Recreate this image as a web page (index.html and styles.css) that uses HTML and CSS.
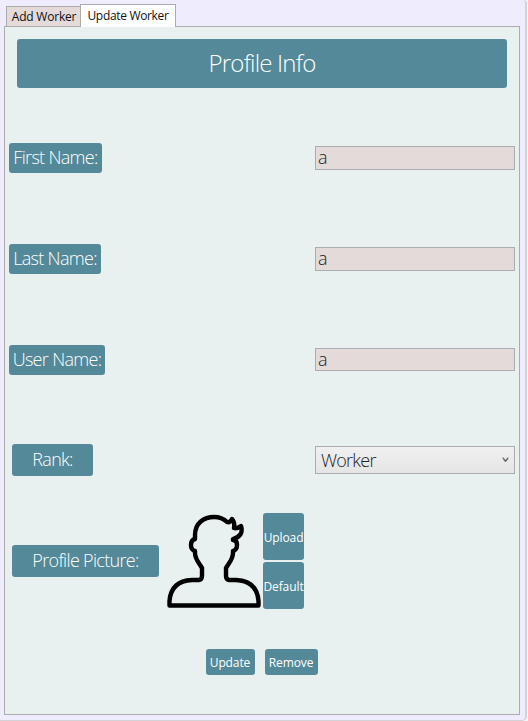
FILE: index.html
```html
<!DOCTYPE html>
<html lang="en">
<head>
<meta charset="utf-8">
<title>Update Worker</title>
<link rel="stylesheet" href="styles.css">
</head>
<body>
<div class="window">
  <div class="tabs">
    <div class="tab tab-add"><span>Add Worker</span></div>
    <div class="tab tab-update"><span>Update Worker</span></div>
  </div>
  <main class="panel">
    <h1 class="title"><span>Profile Info</span></h1>
    <div class="row short"><div class="label first"><span>First Name:</span></div><div class="field">a</div></div>
    <div class="row tall"><div class="label last"><span>Last Name:</span></div><div class="field">a</div></div>
    <div class="row compact"><div class="label user"><span>User Name:</span></div><div class="field small">a</div></div>
    <div class="row tall"><div class="label wide rank"><span>Rank:</span></div>
      <div class="select"><span>Worker</span>
        <svg class="chevron" width="7" height="6" viewBox="0 0 7 6"><path d="M1 .5v1.500L3.500 5 6 2V.5L3.500 3.200z" fill="#606060" stroke="#606060" stroke-width=".5"/></svg>
      </div>
    </div>
    <div class="row short picture-row">
      <div class="label wide picture"><span>Profile Picture:</span></div>
      <svg class="avatar" width="94" height="94" viewBox="0 0 94 94"><path d="M2.500 91.500V87Q4 67 25 66H32Q35 65.500 35 62V54C32 49 28 45 28 39V37Q24 36 24 31Q24 26 28 25V21C28 9 37 3 47 3C53 3 57 5 60 8Q63 9 65 5Q68 8 67 14Q70 15 74 12Q77 22 66 25V26Q70 26 70 31Q70 36 66 37V39C66 45 62 49 59 54V62Q59 65.500 62 66H69Q90 67 91.500 87V91.500Z" fill="none" stroke="#000" stroke-width="4.400" stroke-linejoin="round"/></svg>
      <div class="picture-actions">
        <button class="upload"><span>Upload</span></button>
        <button class="default"><span>Default</span></button>
      </div>
    </div>
    <div class="row actions">
      <button class="update"><span>Update</span></button>
      <button class="remove"><span>Remove</span></button>
    </div>
  </main>
</div>
</body>
</html>
```
FILE: styles.css
```css
* { box-sizing: border-box; }
body {
  margin: 0;
  width: 528px;
  height: 721px;
  overflow: hidden;
  background: #f4f4f8;
  font-family: "Open Sans", "Noto Sans", sans-serif;
  font-size: 12px;
}
.window {
  width: 527px;
  height: 721px;
  padding: 4px 5px 0 4px;
  border: solid #d3d3d7;
  border-width: 0 2px 1px 0;
  border-radius: 0 4px 5px 0;
  background: #efedfd;
}
.tabs {
  display: flex;
  align-items: flex-end;
  height: 22px;
  padding-left: 2px;
}
.tab {
  display: flex;
  justify-content: center;
  border: 1px solid #acacac;
  border-bottom: 0;
  white-space: nowrap;
  color: #111;
}
.tab-add { width: 75px; height: 20px; padding-left: 1px; background: #e3dad9; line-height: 19px; letter-spacing: -.22px; }
.tab-update { width: 96px; height: 23px; margin: 0 0 -1px -1px; background: #fff; line-height: 22px; letter-spacing: -.33px; z-index: 1; }
.panel {
  width: 516px;
  height: 689px;
  border: 1px solid #acacac;
  background: #e8f1f0;
}
.title {
  display: flex;
  justify-content: center;
  width: 490px;
  height: 49px;
  margin: 12px 0 20px 12px;
  border-radius: 3px;
  background: #548999;
  color: #fff;
  font-size: 24px;
  font-weight: 300;
  line-height: 47px;
  letter-spacing: -.8px;
}
.row {
  display: flex;
  align-items: center;
  height: 101px;
  padding: 0 4px;
}
.row.compact { height: 99px; }
.row.short { height: 100px; }
.row.tall { height: 102px; }
.label {
  display: flex;
  justify-content: center;
  height: 30px;
  border-radius: 3px;
  background: #548999;
  color: #fff;
  font-size: 18px;
  font-weight: 300;
  line-height: 28px;
  letter-spacing: -.68px;
  white-space: nowrap;
}
.first { width: 93px; }
.last { width: 92px; }
.user { width: 96px; }
.wide { height: 32px; margin-left: 3px; line-height: 30px; }
.rank { width: 81px; }
.picture { width: 147px; }
.field, .select {
  width: 200px;
  margin-left: auto;
  color: #222;
  font-size: 18px;
  font-weight: 300;
}
.field {
  height: 24px;
  padding-left: 2px;
  border: 1px solid #abadb3;
  background: #e3dad9;
  line-height: 21px;
}
.field.small { height: 23px; }
.select {
  display: flex;
  align-items: center;
  justify-content: space-between;
  height: 28px;
  padding: 0 5px;
  border: 1px solid #acacac;
  background: linear-gradient(#f0f0f0, #e5e5e5);
  line-height: 26px;
  letter-spacing: -.75px;
}
.chevron { margin-bottom: 1px; }
.avatar { margin-left: 8px; }
.picture-actions {
  display: flex;
  flex-direction: column;
  gap: 2px;
  margin-left: 2px;
}
button {
  display: flex;
  align-items: center;
  justify-content: center;
  padding: 2px 0 0;
  border: 0;
  border-radius: 3px;
  background: #548999;
  color: #fff;
  font: 12px "Open Sans", "Noto Sans", sans-serif;
  letter-spacing: -.1px;
  white-space: nowrap;
}
.picture-actions button { width: 41px; height: 47px; }
.actions { justify-content: center; gap: 10px; padding: 0 1px 0 0; }
.update, .remove { height: 26px; }
.update { width: 49px; }
.remove { width: 53px; }
```
